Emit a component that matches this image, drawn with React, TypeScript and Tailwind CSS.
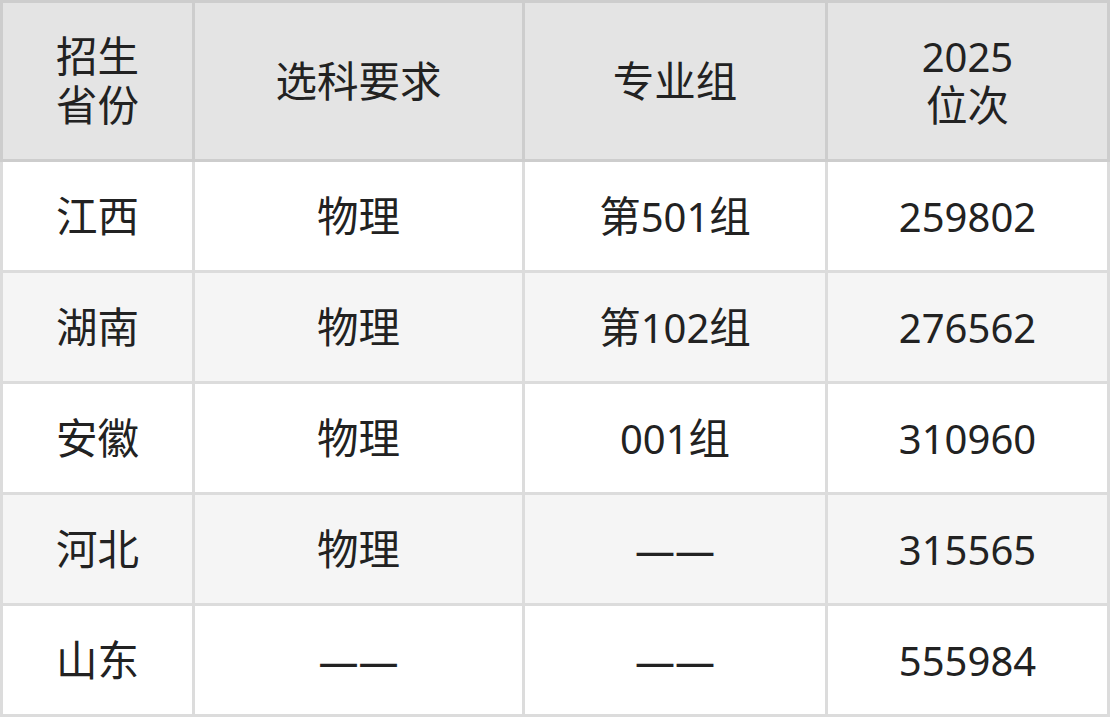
import React from "react";

const rows = [
  ["江西", "物理", "第501组", "259802"],
  ["湖南", "物理", "第102组", "276562"],
  ["安徽", "物理", "001组", "310960"],
  ["河北", "物理", "——", "315565"],
  ["山东", "——", "——", "555984"],
];

const cols = "grid grid-cols-[189px_327px_300px_279px] gap-x-[3px]";

function T({ s }: { s: string }) {
  const parts = s.match(/[\u4e00-\u9fff]+|[^\u4e00-\u9fff]+/g) || [];
  return (
    <>
      {parts.map((p, i) =>
        /[\u4e00-\u9fff]/.test(p) ? (
          <span key={i} className="text-[41.5px]">
            {p}
          </span>
        ) : (
          <span key={i}>{p}</span>
        )
      )}
    </>
  );
}

export default function App() {
  return (
    <div
      className="w-[1110px] h-[717px] text-[#222222] text-[40px] leading-[49px]"
      style={{ fontFamily: '"Noto Sans", "Noto Sans CJK SC", sans-serif' }}
    >
      <div className={`bg-[#cdcdcd] p-[3px] ${cols}`}>
        <div className="bg-[#e4e4e4] h-[156px] flex items-center justify-center text-center">
          <div>
            <T s="招生" />
            <br />
            <T s="省份" />
          </div>
        </div>
        <div className="bg-[#e4e4e4] h-[156px] flex items-center justify-center">
          <T s="选科要求" />
        </div>
        <div className="bg-[#e4e4e4] h-[156px] flex items-center justify-center">
          <T s="专业组" />
        </div>
        <div className="bg-[#e4e4e4] h-[156px] flex items-center justify-center text-center">
          <div>
            2025
            <br />
            <T s="位次" />
          </div>
        </div>
      </div>
      <div className={`bg-[#dcdcdc] px-[3px] pb-[3px] ${cols} gap-y-[3px]`}>
        {rows.map((r, i) =>
          r.map((c, j) => (
            <div
              key={`${i}-${j}`}
              className={`${i % 2 === 1 ? "bg-[#f5f5f5]" : "bg-white"} h-[108px] flex items-center justify-center`}
            >
              <div>
                <T s={c} />
              </div>
            </div>
          ))
        )}
      </div>
    </div>
  );
}
